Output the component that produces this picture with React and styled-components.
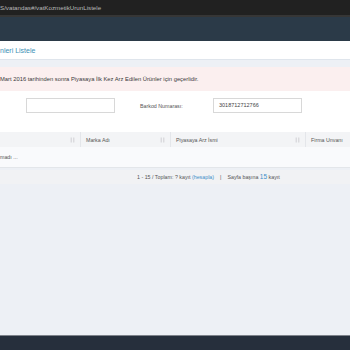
import React from "react";
import styled, { createGlobalStyle } from "styled-components";

const GlobalStyle = createGlobalStyle`
  html, body {
    margin: 0;
    padding: 0;
    background: #edf0f5;
    font-family: "Liberation Sans", Arial, sans-serif;
  }
`;

const Page = styled.div`
  width: 350px;
  height: 350px;
  display: flex;
  flex-direction: column;
  overflow: hidden;
  background: #edf0f5;
`;

const AddressBar = styled.div`
  height: 15px;
  background: #212121;
  border-bottom: 2px solid #363636;
  color: #b9b9b9;
  font-size: 6.2px;
  line-height: 15px;
  white-space: nowrap;
`;

const NavBar = styled.div`
  height: 24px;
  background: #2b3a48;
`;

const TitleBar = styled.div`
  height: 18px;
  background: #fff;
  border-bottom: 1px solid #dfe5ec;
  color: #3d8fb5;
  font-size: 7px;
  line-height: 19px;
`;

const Alert = styled.div`
  margin-top: 7px;
  height: 24px;
  background: #fbefef;
  color: #3a3a3a;
  font-size: 5.8px;
  line-height: 24px;
  white-space: nowrap;
`;

const Panel = styled.div`
  background: #fff;
  padding-top: 7px;
`;

const FormRow = styled.div`
  display: flex;
  align-items: center;
  height: 15px;
  padding-left: 26px;
`;

const Input = styled.div`
  width: ${(p) => p.$w}px;
  height: 13px;
  border: 1px solid #d8d8d8;
  background: #fff;
  color: #444;
  font-size: 5.5px;
  line-height: 13px;
  padding-left: 5px;
  box-sizing: content-box;
`;

const Label = styled.div`
  width: 73px;
  padding-left: 25px;
  color: #555;
  font-size: 5.3px;
`;

const Table = styled.div`
  margin-top: 19px;
`;

const HeadRow = styled.div`
  display: grid;
  grid-template-columns: 80px 90px 135px 45px;
  height: 15px;
  background: #f3f4f6;
`;

const HeadCell = styled.div`
  display: flex;
  align-items: center;
  justify-content: space-between;
  padding: 0 5px 0 ${(p) => (p.$first ? 0 : 5)}px;
  border-left: ${(p) => (p.$first ? "none" : "1px solid #e4e6ea")};
  color: #555;
  font-size: 5.3px;
  white-space: nowrap;
`;

const BodyRow = styled.div`
  height: 20px;
  background: #f9fafc;
  border-bottom: 1px solid #e3e6ea;
  color: #555;
  font-size: 5.3px;
  line-height: 20px;
`;

const Footer = styled.div`
  margin-top: 2px;
  height: 14px;
  background: #f1f2f4;
  color: #555;
  font-size: 5.3px;
  line-height: 14px;
  padding-left: 137px;
  white-space: nowrap;
`;

const Link = styled.span`
  color: #3d8fc9;
  font-size: ${(p) => (p.$big ? "6.5px" : "inherit")};
`;

const Sep = styled.span`
  margin: 0 6px;
`;

const Spacer = styled.div`
  flex: 1;
`;

const BottomBar = styled.div`
  height: 14px;
  background: #262f3c;
  border-top: 1px solid #7d828a;
`;

const SortIcon = () => (
  <svg width="5" height="6" viewBox="0 0 5 6">
    <path d="M1.2 0.5 V5.5 M3.8 0.5 V5.5" stroke="#c6c8cc" strokeWidth="0.8" />
  </svg>
);

const columns = ["", "Marka Adı", "Piyasaya Arz İsmi", "Firma Unvanı"];

export default function App() {
  return (
    <Page>
      <GlobalStyle />
      <AddressBar>S/vatandas#/vatKozmetikUrunListele</AddressBar>
      <NavBar />
      <TitleBar>nleri Listele</TitleBar>
      <Alert>
        Mart 2016 tarihinden sonra Piyasaya İlk Kez Arz Edilen Ürünler için
        geçerlidir.
      </Alert>
      <Panel>
        <FormRow>
          <Input $w={82} />
          <Label>Barkod Numarası:</Label>
          <Input $w={82}>3018712712766</Input>
        </FormRow>
        <Table>
          <HeadRow>
            {columns.map((c, i) => (
              <HeadCell key={i} $first={i === 0}>
                <span>{c}</span>
                {i < 3 && <SortIcon />}
              </HeadCell>
            ))}
          </HeadRow>
          <BodyRow>madı ...</BodyRow>
        </Table>
      </Panel>
      <Footer>
        1 - 15 / Toplam: ? kayıt <Link>(hesapla)</Link>
        <Sep>|</Sep>
        Sayfa başına <Link $big>15</Link> kayıt
      </Footer>
      <Spacer />
      <BottomBar />
    </Page>
  );
}
